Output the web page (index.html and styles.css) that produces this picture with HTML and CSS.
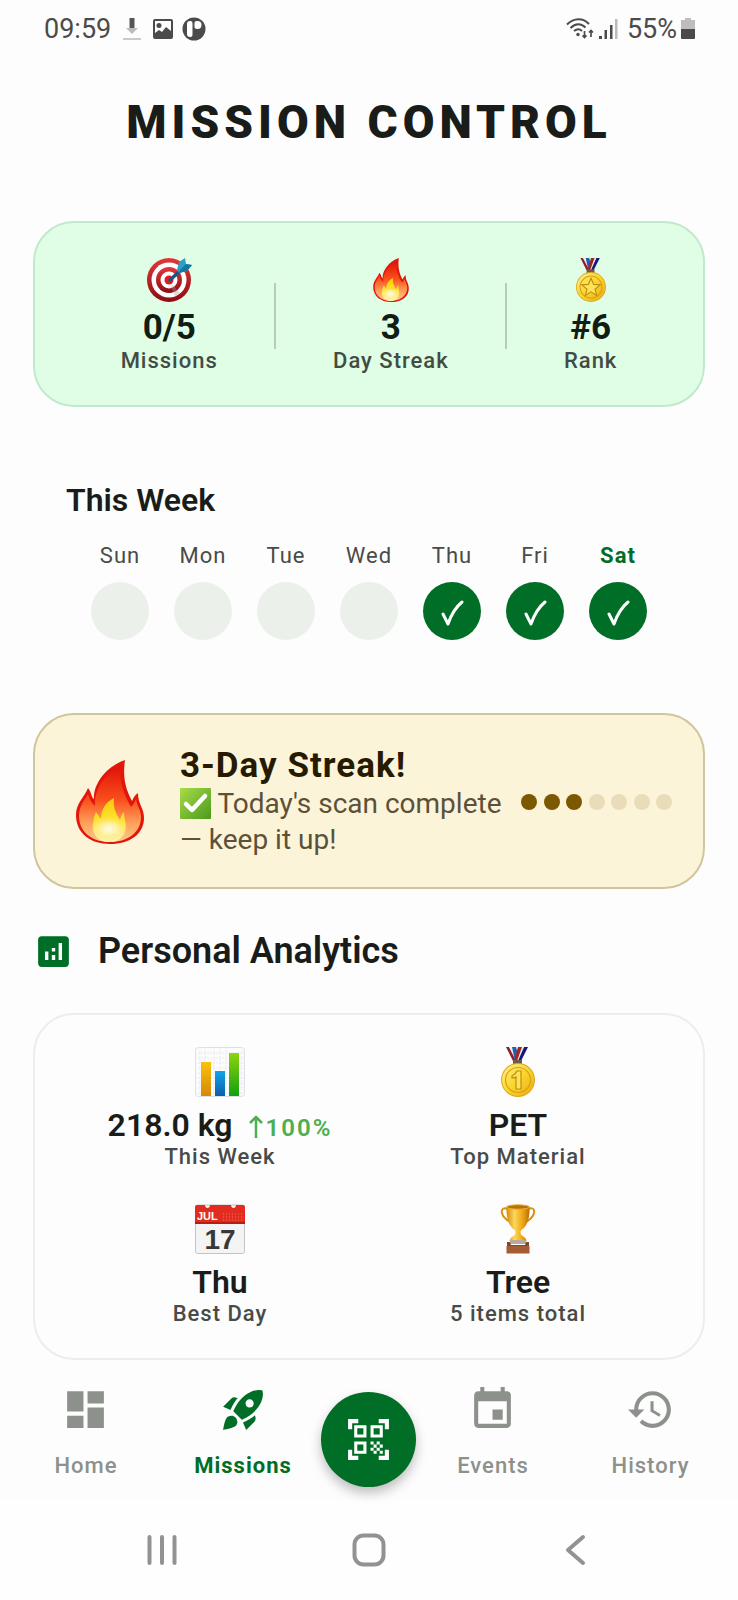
FILE: index.html
```html
<!DOCTYPE html>
<html lang="en">
<head>
  <meta charset="UTF-8" />
  <title>Mission Control</title>
  <meta name="viewport" content="width=device-width, initial-scale=1.0" />
  <link rel="stylesheet" href="styles.css">
</head>
<body>
  <!-- shared gradients and emoji shapes -->
  <svg class="defs" aria-hidden="true">
    <defs>
      <linearGradient id="redRing" x1="0" y1="0" x2="0" y2="1">
        <stop offset="0" stop-color="#e2383a"/><stop offset="1" stop-color="#8c0d12"/>
      </linearGradient>
      <linearGradient id="flameOut" x1="0" y1="0" x2="0" y2="1">
        <stop offset="0" stop-color="#e01208"/><stop offset="0.45" stop-color="#f9501c"/><stop offset="0.75" stop-color="#fda05a"/><stop offset="1" stop-color="#fdc98c"/>
      </linearGradient>
      <linearGradient id="flameIn" x1="0" y1="0" x2="0" y2="1">
        <stop offset="0" stop-color="#fcc60c"/><stop offset="0.5" stop-color="#fde42c"/><stop offset="1" stop-color="#fef6c0"/>
      </linearGradient>
      <radialGradient id="flameGlow">
        <stop offset="0" stop-color="#fffbe6"/><stop offset="0.4" stop-color="#fff3b0" stop-opacity="0.9"/><stop offset="1" stop-color="#fde070" stop-opacity="0"/>
      </radialGradient>
      <linearGradient id="gold" x1="0" y1="0" x2="1" y2="1">
        <stop offset="0" stop-color="#fff08a"/><stop offset="0.5" stop-color="#fbd52e"/><stop offset="1" stop-color="#e9a912"/>
      </linearGradient>
      <linearGradient id="cup" x1="0" y1="0" x2="1" y2="0">
        <stop offset="0" stop-color="#d68a08"/><stop offset="0.35" stop-color="#fdd75a"/><stop offset="0.7" stop-color="#efa514"/><stop offset="1" stop-color="#b86c04"/>
      </linearGradient>
      <linearGradient id="barY" x1="0" y1="0" x2="0" y2="1"><stop offset="0" stop-color="#f8c308"/><stop offset="1" stop-color="#d9860c"/></linearGradient>
      <linearGradient id="barB" x1="0" y1="0" x2="0" y2="1"><stop offset="0" stop-color="#10a4ec"/><stop offset="1" stop-color="#0c5fa8"/></linearGradient>
      <linearGradient id="barG" x1="0" y1="0" x2="0" y2="1"><stop offset="0" stop-color="#8ed40e"/><stop offset="1" stop-color="#10a010"/></linearGradient>
      <linearGradient id="tick" x1="0" y1="0" x2="1" y2="1"><stop offset="0" stop-color="#a8dc4a"/><stop offset="1" stop-color="#4a9a1c"/></linearGradient>
      <symbol id="fire" viewBox="0 0 84 84">
        <path d="M57 0C55 14 56 26 64 41C66 37 67 35 70 33C70 45 76 47 76 58C76 74 62 84 42 84C22 84 8 73 8 55C8 43 16 38 20 28C24 33 23 37 26 39C25 25 37 7 57 0Z" fill="#e3160c"/>
        <path d="M53 6C51 21 55 33 63 47C66 44 67 41 68 39C69 46 73 50 73 57C73 72 60 82 42 82C24 82 11 72 11 56C11 46 16 41 20 34C22 40 24 43 27 46C26 28 38 13 53 6Z" fill="url(#flameOut)"/>
        <path d="M46 38C45 49 48 53 52 60C53 56 54 54 56 52C56 60 59 63 57 71C55 79 48 82 41 82C32 82 25 76 25 67C25 60 26 57 28 52C30 55 31 56 33 59C33 49 38 42 46 38Z" fill="url(#flameIn)"/>
        <ellipse cx="41" cy="69" rx="19" ry="13" fill="url(#flameGlow)"/>
      </symbol>
      <symbol id="ribbon" viewBox="0 0 50 18">
        <path d="M13 0h3l8 14h-4z" fill="#8e1f28"/><path d="M16 0h2l7 14h-2z" fill="#f3eaea"/>
        <path d="M19 0h4l4 14h-5z" fill="#1a62b4"/>
        <path d="M31 0h4l-7 14h-5z" fill="#16187c"/><path d="M29 0h2l-6 14h-3z" fill="#f3eaea"/><path d="M25 0h4l-5 14h-3z" fill="#a3242c"/>
        <path d="M20 13h9v4h-9z" fill="#6d5a48"/>
      </symbol>
      <symbol id="check" viewBox="0 0 24 26">
        <path d="M3 14l5 10c3-9 8-17 14-22" fill="none" stroke="#fff" stroke-width="3" stroke-linecap="round" stroke-linejoin="round"/>
      </symbol>
    </defs>
  </svg>

  <div class="status-bar">
    <div class="status-left">
      <span>09:59</span>
      <svg class="status-download" viewBox="0 0 18 24">
        <path d="M6.500 1h5v10h-5z" fill="#555"/><path d="M3 11h12l-6 6z" fill="#bbb"/><path d="M0 21h18v2H0z" fill="#cacaca"/>
      </svg>
      <svg class="status-photo" viewBox="0 0 20 20">
        <path fill="#4b4b4b" fill-rule="evenodd" d="M2 0h16a2 2 0 0 1 2 2v16a2 2 0 0 1-2 2H2a2 2 0 0 1-2-2V2a2 2 0 0 1 2-2zM2 2v12l4-3 3 2 4-5 5 4V2zM6 4a2 2 0 1 1 0 5a2 2 0 1 1 0-5z"/>
      </svg>
      <svg class="status-app" viewBox="0 0 24 24">
        <circle cx="12" cy="12" r="11.500" fill="#4b4b4b"/>
        <rect x="5" y="4" width="6" height="16" rx="3" fill="#fff"/><circle cx="15.500" cy="8" r="4" fill="#fff"/>
        <path d="M11 4v16M12 4.500v7" stroke="#4b4b4b" stroke-width="1"/>
      </svg>
    </div>
    <div class="status-right">
      <svg class="status-wifi" viewBox="0 0 28 22">
        <g fill="none" stroke="#4b4b4b" stroke-width="2"><path d="M1 6.500C8-.5 17-.5 23 6"/><path d="M4.500 10C9.500 5 15 5 19.500 9.500"/><path d="M8 13C11 10.500 13.500 10.500 16 13"/></g>
        <circle cx="12" cy="16.500" r="1.700" fill="#4b4b4b"/>
        <path d="M18.500 13v6M16.500 17.500l2 2 2-2M25 19v-6M23 14.500l2-2 2 2" fill="none" stroke="#4b4b4b" stroke-width="1.700"/>
      </svg>
      <svg class="status-signal" viewBox="0 0 19 20">
        <path d="M0 17h3v3H0zM5.500 11H8v9H5.500zM11 6h2.500v14H11z" fill="#4b4b4b"/><path d="M16 0h2.500v20H16z" fill="#bbb"/>
      </svg>
      <span>55%</span>
      <svg class="status-battery" viewBox="0 0 14 22">
        <path d="M4 0h6v2h4v9H0V2h4z" fill="#bdbdbd"/><path d="M0 11h14v9a1 1 0 0 1-1 1H1a1 1 0 0 1-1-1z" fill="#4b4b4b"/>
      </svg>
    </div>
  </div>

  <main class="content">
    <h1 class="page-title">MISSION CONTROL</h1>

    <section class="card summary-card">
      <div class="stat">
        <svg class="stat-icon" viewBox="0 0 44 44">
          <circle cx="22" cy="22" r="22" fill="url(#redRing)"/><circle cx="22" cy="22" r="17.500" fill="#fff"/>
          <circle cx="22" cy="22" r="13" fill="url(#redRing)"/><circle cx="22" cy="22" r="8.500" fill="#fff"/>
          <circle cx="22" cy="22" r="4.500" fill="#e01a20"/>
          <path d="M25 26l8 9-5 3-4-9z" fill="#9a9a9a" opacity="0.35"/>
          <path d="M23 22l10-9" stroke="#155a86" stroke-width="3.500" stroke-linecap="round"/>
          <path d="M30 12l2-8 6-4 1 6 6 1-5 6-8 2z" fill="#2c9fc4"/><path d="M33 12l6-6 6 1-5 6-8 2z" fill="#1677a0"/>
        </svg>
        <span class="stat-value">0/5</span>
        <span class="stat-label">Missions</span>
      </div>
      <div class="divider"></div>
      <div class="stat">
        <svg class="stat-icon"><use href="#fire"/></svg>
        <span class="stat-value">3</span>
        <span class="stat-label">Day Streak</span>
      </div>
      <div class="divider"></div>
      <div class="stat">
        <svg class="stat-icon" viewBox="0 0 50 50">
          <use href="#ribbon" width="50" height="18"/>
          <circle cx="25" cy="33" r="17" fill="#dba81c"/><circle cx="25" cy="33" r="16" fill="url(#gold)"/>
          <circle cx="25" cy="33" r="12.500" fill="none" stroke="#d8a213" stroke-width="1.200"/>
          <path d="M25 23l3 7 7.500.5-6 5 2 7-6.500-4-6.500 4 2-7-6-5L22 30z" fill="#fde35c" stroke="#c28d0c" stroke-width="1.300"/>
        </svg>
        <span class="stat-value">#6</span>
        <span class="stat-label">Rank</span>
      </div>
    </section>

    <section class="week">
      <h2 class="week-title">This Week</h2>
      <div class="week-days">
        <div class="day"><span>Sun</span><div class="day-dot"></div></div>
        <div class="day"><span>Mon</span><div class="day-dot"></div></div>
        <div class="day"><span>Tue</span><div class="day-dot"></div></div>
        <div class="day"><span>Wed</span><div class="day-dot"></div></div>
        <div class="day"><span>Thu</span><div class="day-dot done"><svg><use href="#check"/></svg></div></div>
        <div class="day"><span>Fri</span><div class="day-dot done"><svg><use href="#check"/></svg></div></div>
        <div class="day today"><span>Sat</span><div class="day-dot done"><svg><use href="#check"/></svg></div></div>
      </div>
    </section>

    <section class="card streak-card">
      <svg class="streak-icon"><use href="#fire"/></svg>
      <div class="streak-text">
        <h2>3-Day Streak!</h2>
        <p><svg class="tick" viewBox="0 0 31 31"><rect width="31" height="31" rx="1" fill="url(#tick)"/><path d="M6 16l6 6L25 8" fill="none" stroke="#fff" stroke-width="4.500" stroke-linecap="round" stroke-linejoin="round"/></svg> Today's scan complete — keep it up!</p>
      </div>
      <div class="streak-dots">
        <i class="on"></i><i class="on"></i><i class="on"></i><i></i><i></i><i></i><i></i>
      </div>
    </section>

    <div class="section-header">
      <svg viewBox="0 0 24 24"><path d="M19 3H5c-1.100 0-2 .9-2 2v14c0 1.100.9 2 2 2h14c1.100 0 2-.9 2-2V5c0-1.100-.9-2-2-2zM9 17H7v-5h2v5zm4 0h-2v-3h2v3zm0-5h-2v-2h2v2zm4 5h-2V7h2v10z"/></svg>
      <h2>Personal Analytics</h2>
    </div>

    <section class="card analytics-card">
      <div class="metric">
        <svg class="metric-icon" viewBox="0 0 50 50">
          <rect x="0.500" y="0.500" width="49" height="49" rx="3" fill="#fcfcfc" stroke="#dcdfe6"/>
          <path d="M0 6h50M0 11h50M0 16h50M0 21h50M0 26h50M0 31h50M0 36h50M0 41h50M0 46h50M5 0v50M10 0v50M19 0v50M25 0v50M31 0v50M47 0v50" stroke="#e9ebf0" stroke-dasharray="2 1"/>
          <rect x="6" y="15" width="10" height="34" fill="url(#barY)"/><rect x="20" y="24" width="10" height="25" fill="url(#barB)"/><rect x="34" y="6" width="10" height="43" fill="url(#barG)"/>
        </svg>
        <div class="metric-row">
          <span class="metric-value">218.0 kg</span>
          <span class="metric-trend"><svg viewBox="0 0 14 24"><path d="M7 23V2M1 8l6-6 6 6" fill="none" stroke="#4caf50" stroke-width="2.500"/></svg>100%</span>
        </div>
        <span class="metric-label">This Week</span>
      </div>
      <div class="metric">
        <svg class="metric-icon" viewBox="0 0 50 50">
          <use href="#ribbon" width="50" height="18"/>
          <circle cx="25" cy="33" r="17" fill="#dba81c"/><circle cx="25" cy="33" r="16" fill="url(#gold)"/>
          <circle cx="25" cy="33" r="12.500" fill="none" stroke="#d8a213" stroke-width="1.200"/>
          <path d="M19 29c2-1 4-2 5-5h4v18h-5V30c-1 1-2 1-4 1z" fill="#fde35c" stroke="#c28d0c" stroke-width="1.200"/>
        </svg>
        <span class="metric-value">PET</span>
        <span class="metric-label">Top Material</span>
      </div>
      <div class="metric">
        <svg class="metric-icon" viewBox="0 0 50 50">
          <rect x="0.500" y="1" width="49" height="48.500" rx="2" fill="#f4f4f4" stroke="#c4c4c4"/>
          <path d="M2 1h8c0 4 5 4 5 0h21c0 4 5 4 5 0h7a2 2 0 0 1 2 2v17H0V3a2 2 0 0 1 2-2z" fill="#e32c20"/>
          <path d="M0 18h50v2H0z" fill="#b81c14"/>
          <path d="M28 10h19M28 13h19M28 16h19" stroke="#f07068" stroke-dasharray="1 2"/>
          <text class="cal-month" x="2" y="16">JUL</text>
          <text class="cal-day" x="25" y="45">17</text>
        </svg>
        <span class="metric-value">Thu</span>
        <span class="metric-label">Best Day</span>
      </div>
      <div class="metric">
        <svg class="metric-icon" viewBox="0 0 50 50">
          <path d="M15 5c-4-2-7 0-6 4 1 5 6 8 10 10M35 5c4-2 7 0 6 4-1 5-6 8-10 10" fill="none" stroke="#d9920e" stroke-width="2"/>
          <path d="M13.500 3h23c.5 12-3 20-8 23-1.500 1-1 4 0 5 3 2 5 4 5 6h-17c0-2 2-4 5-6 1-1 1.500-4 0-5-5-3-8.500-11-8-23z" fill="url(#cup)"/>
          <ellipse cx="25" cy="3" rx="11.500" ry="2.200" fill="#b5720a" stroke="#f0b42c"/>
          <path d="M17 36h16v4H17z" fill="#b5aa9c"/><path d="M14 38h3l1 3h14l1-3h3v4H14z" fill="#7a4a34"/><path d="M13.500 42h23v7.500h-23z" fill="#a45c34"/>
        </svg>
        <span class="metric-value">Tree</span>
        <span class="metric-label">5 items total</span>
      </div>
    </section>
  </main>

  <nav class="bottom-nav">
    <a class="nav-item" href="#home">
      <svg viewBox="0 0 24 24"><path d="M3 13h8V3H3v10zm0 8h8v-6H3v6zm10 0h8V11h-8v10zm0-18v6h8V3h-8z"/></svg>
      <span>Home</span>
    </a>
    <a class="nav-item active" href="#missions">
      <svg viewBox="0 0 24 24"><path fill-rule="evenodd" d="M9.190 6.350c-2.040 2.290-3.440 5.580-3.570 5.890L2 10.690l4.050-4.050c.47-.47 1.150-.68 1.810-.55l1.330.26zM11.170 17s3.740-1.550 5.890-3.700c5.400-5.400 4.500-9.620 4.210-10.570-.95-.3-5.170-1.190-10.570 4.210C8.550 9.090 7 12.830 7 12.830L11.170 17zm6.480-2.190c-2.290 2.040-5.580 3.440-5.890 3.570L13.310 22l4.050-4.050c.47-.47.68-1.150.55-1.810l-.26-1.330zM9 18c0 .83-.34 1.580-.88 2.120C6.940 21.300 2 22 2 22s.7-4.940 1.880-6.120C4.420 15.340 5.170 15 6 15c1.660 0 3 1.340 3 3zm4-9c0-1.100.9-2 2-2s2 .9 2 2-.9 2-2 2-2-.9-2-2z"/></svg>
      <span>Missions</span>
    </a>
    <button class="scan-button" type="button" aria-label="Scan">
      <svg viewBox="0 0 24 24"><path fill-rule="evenodd" d="M5 5h6v6H5zM6.500 6.500v3h3v-3zM5 13h6v6H5zM6.500 14.500v3h3v-3zM13 5h6v6h-6zM14.500 6.500v3h3v-3zM13 13h1.500v1.500H13zM14.500 14.500H16V16h-1.500zM16 13h1.500v1.500H16zM13 16h1.500v1.500H13zM14.500 17.500H16V19h-1.500zM16 16h1.500v1.500H16zM17.500 14.500H19V16h-1.500zM17.500 17.500H19V19h-1.500zM22 7h-2V4h-3V2h5zM22 22v-5h-2v3h-3v2zM2 22h5v-2H4v-3H2zM2 2v5h2V4h3V2z"/></svg>
    </button>
    <a class="nav-item" href="#events">
      <svg viewBox="0 0 24 24"><path d="M17 12h-5v5h5v-5zM16 1v2H8V1H6v2H5c-1.110 0-1.990.9-1.990 2L3 19c0 1.100.89 2 2 2h14c1.100 0 2-.9 2-2V5c0-1.100-.9-2-2-2h-1V1h-2zm3 18H5V8h14v11z"/></svg>
      <span>Events</span>
    </a>
    <a class="nav-item" href="#history">
      <svg viewBox="0 0 24 24"><path d="M13 3c-4.970 0-9 4.030-9 9H1l3.890 3.890.07.14L9 12H6c0-3.870 3.130-7 7-7s7 3.130 7 7-3.130 7-7 7c-1.930 0-3.680-.79-4.940-2.060l-1.420 1.420C8.270 19.990 10.510 21 13 21c4.970 0 9-4.030 9-9s-4.030-9-9-9zm-1 5v5l4.280 2.540.72-1.210-3.500-2.080V8H12z"/></svg>
      <span>History</span>
    </a>
  </nav>

  <div class="system-nav">
    <button type="button" aria-label="Recent apps"><svg viewBox="0 0 34 34"><path d="M4.500 4v26M17 4v26M29.500 4v26"/></svg></button>
    <button type="button" aria-label="Home"><svg viewBox="0 0 34 34"><rect x="2.500" y="2.500" width="29" height="29" rx="9"/></svg></button>
    <button type="button" aria-label="Back"><svg viewBox="0 0 34 34"><path d="M24 4L9 17l15 13"/></svg></button>
  </div>
</body>
</html>
```
FILE: styles.css
```css
* {
  box-sizing: border-box;
}

body {
  margin: 0;
  background: #fdfdfd;
  color: #191c19;
  font-family: Roboto, sans-serif;
}

h1, h2, p {
  margin: 0;
}

svg {
  display: block;
  flex-shrink: 0;
}

.defs {
  position: absolute;
  width: 0;
  height: 0;
}

/* status bar */
.status-bar {
  display: flex;
  justify-content: space-between;
  align-items: center;
  height: 57px;
  padding: 0 43px 0 44px;
  color: #4b4b4b;
  font-size: 27px;
  font-weight: 400;
}

.status-left,
.status-right {
  display: flex;
  align-items: center;
}

.status-download {
  width: 18px;
  height: 24px;
  margin-left: 12px;
}

.status-photo {
  width: 20px;
  height: 20px;
  margin-left: 12px;
}

.status-app {
  width: 24px;
  height: 24px;
  margin-left: 9px;
}

.status-wifi {
  width: 28px;
  height: 22px;
}

.status-signal {
  width: 19px;
  height: 20px;
  margin: 0 9px 0 5px;
}

.status-battery {
  width: 14px;
  height: 22px;
  margin-left: 4px;
}

/* content */
.content {
  padding: 35px 33px 0;
}

.page-title {
  margin-bottom: 69px;
  text-align: center;
  font-size: 46px;
  line-height: 60px;
  font-weight: 900;
  letter-spacing: 5px;
}

.card {
  border: 2px solid;
  border-radius: 41px;
}

.summary-card {
  display: flex;
  justify-content: space-evenly;
  align-items: center;
  padding: 35px 29px 31px;
  background: #e0fee5;
  border-color: #c1e9cc;
}

.stat {
  display: flex;
  flex-direction: column;
  align-items: center;
}

.stat-icon {
  width: 44px;
  height: 44px;
  margin-bottom: 6px;
  overflow: visible;
}

.stat-value {
  font-size: 35px;
  line-height: 40px;
  font-weight: 700;
  color: #111c13;
}

.stat-label,
.metric-label {
  font-size: 22px;
  line-height: 26px;
  font-weight: 500;
  letter-spacing: 1px;
  color: #484b48;
}

.stat-label {
  color: #414d43;
}

.divider {
  width: 2px;
  height: 66px;
  background: #b5cdb8;
}

/* week */
.week {
  padding: 73px 33px;
}

.week-title {
  margin-bottom: 23px;
  font-size: 32px;
  line-height: 40px;
  font-weight: 600;
}

.week-days {
  display: flex;
  justify-content: space-evenly;
}

.day {
  display: flex;
  flex-direction: column;
  align-items: center;
  gap: 13px;
  width: 58px;
  font-size: 22px;
  line-height: 26px;
  letter-spacing: 1px;
  color: #484b48;
}

.day.today {
  color: #006e26;
  font-weight: 700;
}

.day-dot {
  display: flex;
  justify-content: center;
  align-items: center;
  width: 58px;
  height: 58px;
  padding-top: 4px;
  border-radius: 50%;
  background: #ecf0eb;
}

.day-dot.done {
  background: #006e26;
}

.day-dot svg {
  width: 24px;
  height: 26px;
}

/* streak */
.streak-card {
  display: flex;
  align-items: center;
  padding: 31px 31px 29px 33px;
  background: #fcf4d9;
  border-color: #d0c59c;
}

.streak-icon {
  width: 84px;
  height: 84px;
}

.streak-text {
  flex: 1;
  margin: 0 10px 0 28px;
}

.streak-text h2 {
  font-size: 35px;
  line-height: 40px;
  font-weight: 700;
  letter-spacing: 1px;
  color: #261a00;
}

.streak-text p {
  font-size: 28px;
  line-height: 36px;
  color: #5c5138;
}

.tick {
  display: inline-block;
  width: 31px;
  height: 31px;
  vertical-align: -6px;
}

.streak-dots {
  display: flex;
  justify-content: space-between;
  width: 151px;
}

.streak-dots i {
  width: 16px;
  height: 16px;
  border-radius: 50%;
  background: #e8ddb8;
}

.streak-dots .on {
  background: #7c5800;
}

/* analytics */
.section-header {
  display: flex;
  align-items: center;
  gap: 24px;
  margin: 40px 0;
}

.section-header svg {
  width: 41px;
  height: 41px;
  fill: #006e26;
}

.section-header h2 {
  font-size: 36px;
  line-height: 44px;
  font-weight: 600;
}

.analytics-card {
  display: grid;
  grid-template-columns: 1fr 1fr;
  row-gap: 34px;
  padding: 32px 36px 31px;
  border-color: #ededed;
}

.metric {
  display: flex;
  flex-direction: column;
  align-items: center;
}

.metric-icon {
  width: 50px;
  height: 50px;
  margin-bottom: 9px;
}

.metric-row {
  display: flex;
  align-items: baseline;
  gap: 16px;
}

.metric-value {
  font-size: 32px;
  line-height: 38px;
  font-weight: 600;
}

.metric-trend {
  font-size: 24px;
  line-height: 26px;
  font-weight: 600;
  letter-spacing: 2px;
  color: #4caf50;
}

.metric-trend svg {
  display: inline-block;
  width: 14px;
  height: 24px;
  margin-right: 3px;
  vertical-align: -3px;
}

.cal-month {
  font-family: "Liberation Sans", sans-serif;
  font-size: 11px;
  font-weight: 700;
  fill: #fff;
}

.cal-day {
  font-family: "Liberation Sans", sans-serif;
  font-size: 28px;
  font-weight: 700;
  fill: #383838;
  text-anchor: middle;
}

/* bottom navigation */
.bottom-nav {
  display: grid;
  grid-template-columns: 172fr 142fr 109fr 140fr 175fr;
  justify-items: center;
  height: 140px;
  padding-top: 25px;
}

.nav-item {
  display: flex;
  flex-direction: column;
  align-items: center;
  gap: 19px;
  color: #8d918c;
  font-size: 22px;
  line-height: 26px;
  font-weight: 500;
  letter-spacing: 1px;
  text-decoration: none;
}

.nav-item svg,
.scan-button svg {
  width: 49px;
  height: 49px;
  fill: currentColor;
}

.nav-item.active {
  color: #006e26;
  font-weight: 700;
}

.scan-button {
  display: flex;
  justify-content: center;
  align-items: center;
  width: 95px;
  height: 95px;
  margin-top: 7px;
  padding: 0;
  border: 0;
  border-radius: 50%;
  background: #006e26;
  color: #fff;
  box-shadow: 0 6px 12px rgba(0, 0, 0, 0.25);
}

/* android buttons */
.system-nav {
  display: grid;
  grid-template-columns: repeat(3, 28%);
  justify-content: center;
  justify-items: center;
  height: 100px;
  background: #fefefe;
}

.system-nav button {
  display: flex;
  align-items: center;
  padding: 0;
  border: 0;
  background: none;
}

.system-nav svg {
  width: 34px;
  height: 34px;
  fill: none;
  stroke: #929292;
  stroke-width: 4;
  stroke-linecap: round;
  stroke-linejoin: round;
}
```
